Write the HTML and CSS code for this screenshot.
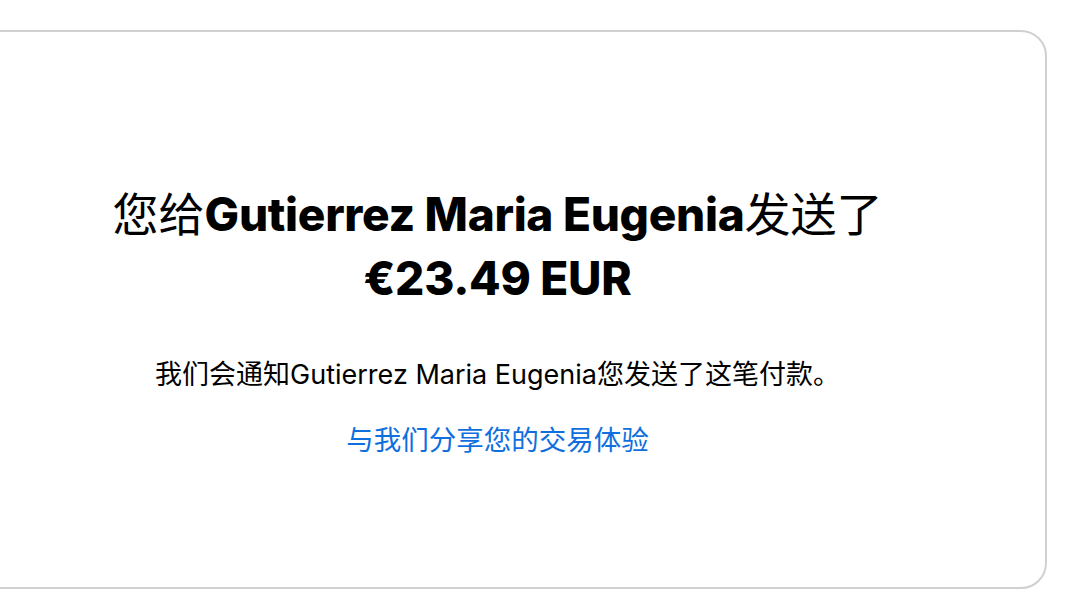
FILE: index.html
```html
<!DOCTYPE html>
<html lang="zh-CN">
<head>
<meta charset="utf-8">
<title>付款已发送</title>
<link rel="stylesheet" href="styles.css">
</head>
<body>
  <main class="card">
    <section class="content">
      <h1 class="title">
        <span class="line">您给<span class="name">Gutierrez Maria Eugenia</span>发送了</span>
        <span class="line amount">€23.49 EUR</span>
      </h1>
      <p class="note">我们会通知Gutierrez Maria Eugenia您发送了这笔付款。</p>
      <a class="link" href="#">与我们分享您的交易体验</a>
    </section>
  </main>
</body>
</html>
```

FILE: styles.css
```css
html, body {
  margin: 0;
  padding: 0;
  background: #ffffff;
}

body {
  width: 1084px;
  height: 594px;
  overflow: hidden;
  font-family: Inter, "Noto Sans CJK SC", sans-serif;
  color: #000000;
}

.card {
  box-sizing: border-box;
  margin: 30px 0 0 -52px;
  width: 1099px;
  height: 559px;
  border: 2px solid #d0d0d0;
  border-radius: 26px;
  background: #ffffff;
}

.content {
  display: flex;
  flex-direction: column;
  align-items: center;
  padding-top: 150px;
}

.title {
  margin: 0;
  font-size: 46px;
  line-height: 64px;
  font-weight: 400;
  text-align: center;
  font-family: Inter, "Noto Sans CJK SC", sans-serif;
}

.line {
  display: block;
  white-space: nowrap;
}

.name,
.amount {
  font-family: Inter, "Noto Sans CJK SC", sans-serif;
  font-weight: 800;
  letter-spacing: -0.3px;
}

.note {
  margin: 47px 0 0;
  font-size: 27px;
  line-height: 36px;
  white-space: nowrap;
}

.link {
  margin-top: 29px;
  font-size: 27.5px;
  line-height: 36px;
  color: #0f6fde;
  text-decoration: none;
}
```
